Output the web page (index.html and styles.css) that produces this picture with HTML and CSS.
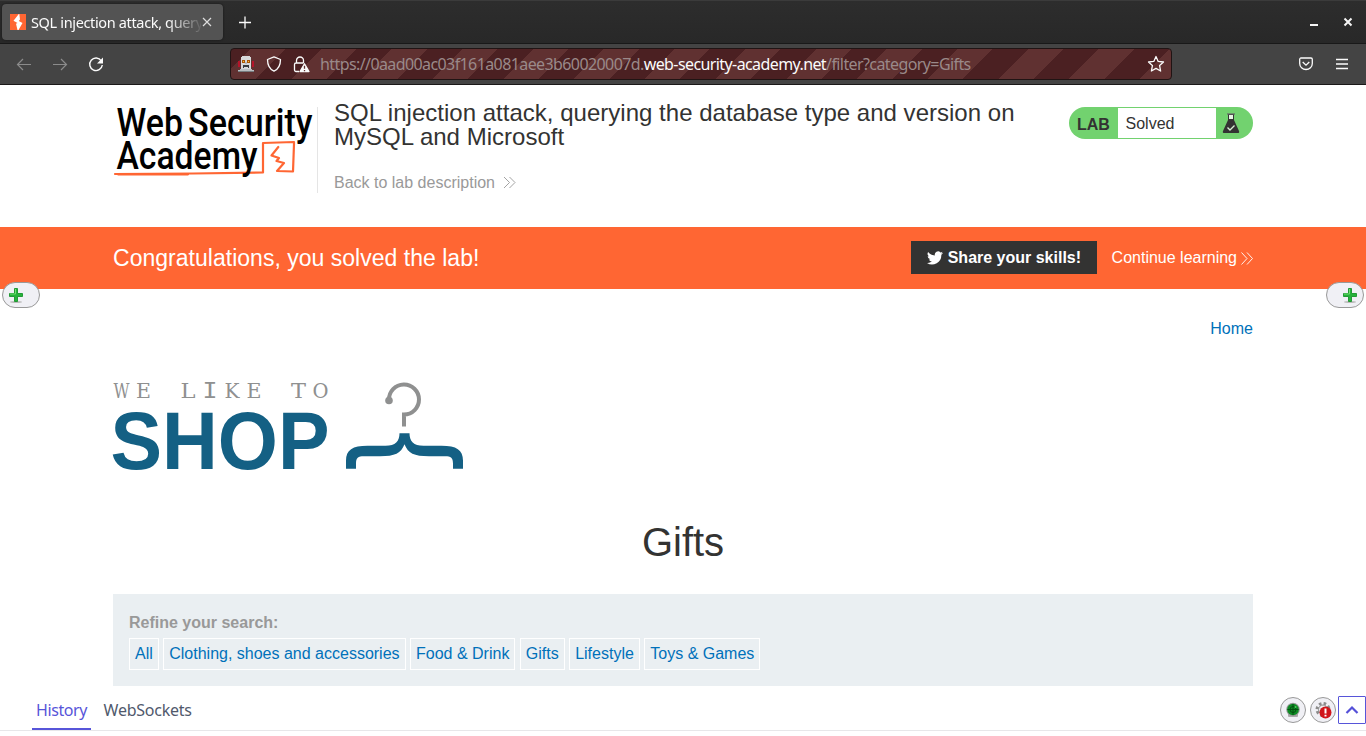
FILE: index.html
```html
<!DOCTYPE html>
<html lang="en">
<head>
<meta charset="utf-8">
<title>SQL injection attack, querying the database type and version on MySQL and Microsoft</title>
<link rel="stylesheet" href="styles.css">
</head>
<body>
<div class="tabbar">
  <div class="tab">
    <svg class="favicon" width="16" height="16" viewBox="0 0 16 16"><rect width="16" height="16" fill="#ff6633"/><path d="M8.800 0L3.500 6.800 7.500 9 6 9.800 7.500 16h1l4-7-3.700-2L10 5.500 9.300 0z" fill="#fff"/></svg>
    <span class="tab-title">SQL injection attack, query</span>
    <svg class="tab-close" width="10" height="10" viewBox="0 0 10 10" stroke="#ddd" stroke-width="1.200"><path d="M1 1l8 8M9 1l-8 8"/></svg>
  </div>
  <svg class="plus" width="12" height="12" viewBox="0 0 12 12" stroke="#fbfbfb" stroke-width="1.300"><path d="M6 .5v12M0 6.500h12"/></svg>
  <div class="winbtns">
    <svg width="8" height="10" viewBox="0 0 8 10"><path d="M0 7h8v2H0z" fill="#f5f5f5"/></svg>
    <svg width="8" height="8" viewBox="0 0 8 8" stroke="#f5f5f5" stroke-width="2"><path d="M.5 .5l7 7M7.500 .5l-7 7"/></svg>
  </div>
</div>
<div class="toolbar">
  <div class="nav">
    <svg width="16" height="16" viewBox="0 0 16 16" fill="none" stroke="#8b8b8b" stroke-width="1.200"><path d="M15 8.500H1.500M7 3L1.500 8.500 7 14"/></svg>
    <svg width="16" height="16" viewBox="0 0 16 16" fill="none" stroke="#8b8b8b" stroke-width="1.200"><path d="M1 8.500h13.500M9 3L14.500 8.500 9 14"/></svg>
    <svg width="16" height="16" viewBox="0 0 16 16" fill="none" stroke="#fbfbfb" stroke-width="1.400"><path d="M13.300 4.800A6.300 6.300 0 1 0 14.300 9"/><path d="M15 1.500v6H9z" fill="#fbfbfb" stroke="none"/></svg>
  </div>
  <div class="urlbar">
    <svg class="robot" width="17" height="17" viewBox="0 0 17 17"><path d="M0 5h2v6H0zM14 5h2v6h-2z" fill="#b5142a"/><path d="M4 0h8v1h1v12H3V1h1z" fill="#d7d9da"/><path d="M2 13h12v1h2v2H0v-2h2z" fill="#b9bec1"/><path d="M0 15h16v1H0z" fill="#777c80"/><path d="M4 4h3v3H4zM9 4h3v3H9z" fill="#a95606"/><path d="M5 5h1v1H5zM10 5h1v1h-1z" fill="#ffc33a"/><path d="M5 9h6v3h-1v-1H6v1H5z" fill="#393c40"/><path d="M7.500 6h1v2h-1z" fill="#969a9d"/></svg>
    <svg class="shield" width="16" height="16" viewBox="0 0 16 16" fill="none" stroke="#fbfbfb" stroke-width="1.300"><path d="M8 .8l6.500 2.700c0 5-1.300 9.300-6.500 11.700C2.800 12.800 1.500 8.500 1.500 3.500z" stroke-linejoin="round"/></svg>
    <svg class="lock" width="17" height="17" viewBox="0 0 17 17" fill="none" stroke="#fbfbfb" stroke-width="1.300"><path d="M3.500 7V4.500a3.500 3.500 0 0 1 7 0V7M6 15.500H3a1.500 1.500 0 0 1-1.500-1.500V8.500A1.500 1.500 0 0 1 3 7h7.500"/><path d="M11.500 7.800L16 15.500H7z" fill="#fbfbfb" stroke-linejoin="round"/><path d="M11.500 9.800v3M11.500 14v1.200" stroke="#5f3131"/></svg>
    <span class="url">https://0aad00ac03f161a081aee3b60020007d.<b>web-security-academy.net</b>/filter?category=Gifts</span>
    <svg class="star" width="18" height="18" viewBox="0 0 18 18" fill="none" stroke="#fbfbfb" stroke-width="1.300" stroke-linejoin="round"><path d="M9 1.500l2.200 4.900 5.300.6-3.900 3.600 1 5.400L9 13.400 4.400 16l1-5.400L1.500 7l5.300-.6z"/></svg>
  </div>
  <div class="tools">
    <svg width="14" height="14" viewBox="0 0 14 14" fill="none" stroke="#fbfbfb" stroke-width="1.300"><path d="M2 1h10a1.300 1.300 0 0 1 1.300 1.300V6.500a6.300 6 0 0 1-12.600 0V2.300A1.300 1.300 0 0 1 2 1z"/><path d="M3.700 5L7 8.200 10.300 5"/></svg>
    <svg width="12" height="11" viewBox="0 0 12 11" stroke="#fbfbfb" stroke-width="1.300"><path d="M0 .5h12M0 5h12M0 9.500h12"/></svg>
  </div>
</div>

<header class="lab-header">
  <svg class="logo" width="204" height="86" viewBox="0 0 204 86">
    <g class="logo-text">
      <text x="3.500" y="28.600" textLength="66.500" lengthAdjust="spacingAndGlyphs">Web</text>
      <text x="75" y="28.600" textLength="124.500" lengthAdjust="spacingAndGlyphs">Security</text>
    </g>
    <g fill="none" stroke="#ff6633" stroke-width="2.200" stroke-linejoin="round" stroke-linecap="round">
      <path d="M2 67L80 66.500 150 65.500V36L181 35V37l-1 27.500-16-.5 7-8-7.500-2 2.500-3-7.500-2.500 6.800-8.500"/>
      <path d="M5 67.300l70 0"/>
    </g>
    <text class="logo-text" x="3.500" y="61.500" textLength="141" lengthAdjust="spacingAndGlyphs">Academy</text>
  </svg>
  <div class="title-box">
    <h2>SQL injection attack, querying the database type and version on MySQL and Microsoft</h2>
    <a class="back">Back to lab description<svg width="13" height="12" viewBox="0 0 13 12" fill="none" stroke="#999" stroke-width=".9"><path d="M1 0L6.500 5.500 1 11M6.500 0L12 5.500 6.500 11"/></svg></a>
  </div>
  <div class="status">
    <span class="status-lab">LAB</span><span class="status-text">Solved</span>
    <svg width="18" height="21" viewBox="0 0 18 21"><path d="M6 1v6L1 18q-.8 2 1.300 2h13.400q2.100 0 1.300-2L12 7V1z" fill="#333332"/><path d="M7 2h4v4H7z" fill="#e8f5e5"/><path d="M5 1h8" stroke="#666" stroke-width="1.200"/><path d="M5.500 14.500l2.500 2.500 4.500-4.500" fill="none" stroke="#d8efd4" stroke-width="1.400"/></svg>
  </div>
</header>

<section class="banner">
  <div class="banner-inner">
    <h4>Congratulations, you solved the lab!</h4>
    <a class="share"><svg width="16" height="14" viewBox="0 0 24 20"><path d="M24 2.400a9.800 9.800 0 0 1-2.800.8A5 5 0 0 0 23.300.5a9.800 9.800 0 0 1-3.100 1.200A4.900 4.900 0 0 0 11.800 6.200 14 14 0 0 1 1.700 1a4.900 4.900 0 0 0 1.500 6.600A4.900 4.900 0 0 1 1 7a4.900 4.900 0 0 0 3.900 4.900 4.900 4.900 0 0 1-2.200.1 4.900 4.900 0 0 0 4.600 3.400A9.900 9.900 0 0 1 0 17.500 14 14 0 0 0 21.500 5.100 10 10 0 0 0 24 2.400z" fill="#fff"/></svg>Share your skills!</a>
    <a class="continue">Continue learning<svg width="12" height="13" viewBox="0 0 12 13" fill="none" stroke="#fff" stroke-width=".9"><path d="M.5 .5l5.500 6-5.500 6M6 .5l5.500 6-5.500 6"/></svg></a>
  </div>
  <span class="pill pill-left"><svg width="16" height="16" viewBox="0 0 16 16"><ellipse cx="8" cy="15" rx="6" ry="1" fill="#bbb"/><path d="M6.500 1.500h3v5h5v3h-5v5h-3v-5h-5v-3h5z" fill="#26b33b" stroke="#17932b" stroke-width=".9"/><path d="M7.500 2v5H2" fill="none" stroke="#70df70" stroke-width="1"/></svg></span>
  <span class="pill pill-right"><svg width="16" height="16" viewBox="0 0 16 16"><ellipse cx="8" cy="15" rx="6" ry="1" fill="#bbb"/><path d="M6.500 1.500h3v5h5v3h-5v5h-3v-5h-5v-3h5z" fill="#26b33b" stroke="#17932b" stroke-width=".9"/><path d="M7.500 2v5H2" fill="none" stroke="#70df70" stroke-width="1"/></svg></span>
</section>

<main class="shop">
  <nav class="links"><a>Home</a></nav>
  <svg class="shop-logo" width="352" height="92" viewBox="0 0 352 92">
    <g class="typed">
      <text x="0.500" y="17.500" textLength="16" lengthAdjust="spacingAndGlyphs">W</text>
      <text x="23" y="17.500" textLength="15" lengthAdjust="spacingAndGlyphs">E</text>
      <text x="67.500" y="17.500" textLength="15" lengthAdjust="spacingAndGlyphs">L</text>
      <text class="typed-i" x="89.500" y="17.500" textLength="15" lengthAdjust="spacingAndGlyphs">I</text>
      <text x="111.500" y="17.500" textLength="15" lengthAdjust="spacingAndGlyphs">K</text>
      <text x="133.500" y="17.500" textLength="15" lengthAdjust="spacingAndGlyphs">E</text>
      <text x="178" y="17.500" textLength="15" lengthAdjust="spacingAndGlyphs">T</text>
      <text x="199.500" y="17.500" textLength="16" lengthAdjust="spacingAndGlyphs">O</text>
    </g>
    <text class="shop-word" x="-2.500" y="88.500" textLength="219" lengthAdjust="spacingAndGlyphs">SHOP</text>
    <path d="M276 20A15 15 0 1 1 291 34.500V46.500" fill="none" stroke="#8f9090" stroke-width="4"/>
    <circle cx="276" cy="20.500" r="3.800" fill="#8f9090"/>
    <path d="M286.500 53.200h10c0 8 4 12.500 14 12.500h18c15 0 21.500 4 21.500 15v8h-10v-5c0-6-2-7.500-8-7.500h-16c-15 0-21-3-24.500-12-3.500 9-9.500 12-24.500 12h-16c-6 0-8 1.500-8 7.500v5h-10v-8c0-11 6.500-15 21.500-15h18c10 0 14-4.500 14-12.500z" fill="#146084"/>
  </svg>
  <h1>Gifts</h1>
  <section class="search">
    <label>Refine your search:</label>
    <div class="filters"><a>All</a><a>Clothing, shoes and accessories</a><a>Food &amp; Drink</a><a>Gifts</a><a>Lifestyle</a><a>Toys &amp; Games</a></div>
  </section>
</main>

<footer class="hud">
  <span class="hud-tab active">History</span><span class="hud-tab">WebSockets</span>
  <div class="hud-tools">
    <span class="round"><svg width="16" height="16" viewBox="0 0 16 16"><rect x="3" y="12" width="10" height="3" rx="1" fill="#aaa"/><circle cx="8" cy="7.500" r="6.800" fill="#999"/><circle cx="8" cy="7.500" r="5.800" fill="#0b8a22"/><path d="M8 2v11M2.500 7.500h11" stroke="#045010"/><circle cx="8" cy="7.500" r="3" fill="none" stroke="#045010"/><circle cx="10.500" cy="5" r="1" fill="#4cd35b"/></svg></span>
    <span class="round"><svg width="17" height="17" viewBox="0 0 17 17"><circle cx="8" cy="7.500" r="6" fill="none" stroke="#8b8b8b" stroke-width="3" stroke-dasharray="2.500 2.200"/><circle cx="8" cy="7.500" r="4.500" fill="#ededf0" stroke="#8b8b8b"/><circle cx="10.500" cy="10.500" r="6" fill="#d0151b"/><path d="M10.500 6.500v5M10.500 12.700v1.800" stroke="#fff" stroke-width="2"/></svg></span>
    <span class="up"><svg width="14" height="8" viewBox="0 0 14 8" fill="none" stroke="#5550d8" stroke-width="2.200"><path d="M1.500 7L7 1.500 12.500 7"/></svg></span>
  </div>
</footer>
</body>
</html>
```
FILE: styles.css
```css
* { box-sizing: border-box; }
body { margin: 0; width: 1366px; height: 736px; overflow: hidden; background: #fff; color: #333332; font: 16px/24px "Liberation Sans", Arial, sans-serif; display: flex; flex-direction: column; }
svg { display: block; flex: none; overflow: visible; }
h1, h2, h4 { margin: 0; font-weight: 400; }

.tabbar { flex: none; height: 44px; background: linear-gradient(#2d2d2d, #282828); border-top: 1px solid #3b3b3b; border-bottom: 1px solid #191919; display: flex; align-items: center; padding: 0 14px 0 2px; }
.tab { width: 221px; height: 36px; border-radius: 4px; background: #535353; box-shadow: 0 0 2px #111; display: flex; align-items: center; padding: 0 11px 0 8px; }
.tab-title { margin-left: 5px; width: 170px; overflow: hidden; white-space: nowrap; font: 14.500px/20px "Noto Sans", sans-serif; letter-spacing: -.35px; color: #fbfbfb; -webkit-mask-image: linear-gradient(to right, #000 136px, transparent 173px); mask-image: linear-gradient(to right, #000 136px, transparent 173px); }
.tab-close { margin-left: 1px; }
.plus { margin-left: 16px; }
.winbtns { margin-left: auto; display: flex; align-items: center; gap: 26px; }

.toolbar { flex: none; height: 41px; background: #444; border-bottom: 1px solid #1b1919; display: flex; align-items: center; padding: 0 18px 0 16px; }
.nav { width: 214px; display: flex; gap: 20px; }
.urlbar { width: 942px; height: 32px; border: 1px solid #201414; border-radius: 4px; background: repeating-linear-gradient(-45deg, #603131 -2.800px 22.200px, #4b2022 22.200px 47.200px); display: flex; align-items: center; padding: 0 6px 0 7px; }
.shield { margin-left: 11px; }
.lock { margin-left: 11px; }
.url { margin-left: 10px; font: 16px/24px "Noto Sans", sans-serif; letter-spacing: -.595px; color: #9a8989; white-space: nowrap; }
.url b { font-weight: 400; color: #fbfbfb; }
.star { margin-left: auto; }
.tools { margin-left: auto; display: flex; align-items: center; gap: 23px; }

.lab-header { flex: none; width: 1140px; height: 142px; margin: 0 auto; padding-top: 22px; display: flex; align-items: flex-start; }
.logo-text { font: 500 38px Roboto, sans-serif; fill: #000; }
.title-box { width: 740px; height: 86px; border-left: 1px solid #e5e5e5; padding-left: 16px; display: flex; flex-direction: column; justify-content: space-between; }
.title-box h2 { margin-top: -6px; font-size: 24px; line-height: 24px; letter-spacing: .015px; }
.back { color: #999; display: flex; align-items: center; gap: 8px; line-height: 20px; }
.status { margin-left: auto; width: 184px; height: 32px; border-radius: 16px; background: #72d26f; display: flex; align-items: center; padding: 1px 13px 1px 8px; justify-content: space-between; }
.status-lab { font-weight: 700; width: 41px; padding-top: 3px; }
.status-text { width: 98px; height: 30px; padding-left: 7.500px; line-height: 31px; background: #fff; margin-right: 6px; }

.banner { flex: none; position: relative; height: 62px; background: #ff6633; color: #fff; }
.banner-inner { width: 1140px; height: 62px; margin: 0 auto; display: flex; align-items: center; }
.banner h4 { font-size: 23px; letter-spacing: .02px; }
.share { margin-left: auto; margin-bottom: 1px; height: 33px; padding: 1px 16px 0 16px; background: #333332; font-weight: 700; display: flex; align-items: center; gap: 4.500px; }
.continue { margin-left: 14.500px; display: flex; align-items: center; gap: 4px; }
.pill { position: absolute; top: 55px; width: 38px; height: 26px; border: 1px solid #999; border-radius: 13px; background: #f0f0f5; display: flex; align-items: center; padding: 0 5px; }
.pill-left { left: 2px; }
.pill-right { right: 2px; justify-content: flex-end; }

.shop { flex: none; width: 1140px; height: 402px; margin: 0 auto; padding-top: 28px; display: flex; flex-direction: column; }
.links { display: flex; justify-content: flex-end; color: #0071ba; }
.shop-logo { margin-top: 39px; }
.typed { font: 21px "DejaVu Serif", serif; fill: #8f9090; }
.typed-i { font: 20.500px "DejaVu Sans Mono", monospace; }
.shop-word { font: 700 81px "Liberation Sans", Arial, sans-serif; fill: #146084; }
h1 { margin-top: 47px; font-size: 40px; line-height: 46px; text-align: center; }
.search { margin-top: 29px; height: 92px; padding: 17px 16px 15px; background: #eaeff2; }
.search label { display: block; font-weight: 700; color: #999; }
.filters { display: flex; gap: 4.450px; margin-top: 3px; }
.filters a { border: 1px solid #fff; padding: 3px 5px 5px; height: 32px; line-height: 23px; color: #0071ba; white-space: nowrap; }

.hud { flex: none; height: 40px; border-bottom: 1px solid #e7e7e9; display: flex; padding-left: 32px; font: 16px/24px "Noto Sans", sans-serif; letter-spacing: -.25px; color: #50596c; }
.hud-tab { height: 39px; padding: 7px 4px 0; margin-right: 8.500px; }
.active { letter-spacing: -.4px; color: #5755d9; border-bottom: 2px solid #5755d9; }
.hud-tools { margin-left: auto; display: flex; align-items: center; gap: 4px; margin-top: -1px; }
.round { width: 26px; height: 26px; border: 1px solid #999; border-radius: 50%; background: #f0f0f5; display: flex; align-items: center; justify-content: center; }
.up { width: 28px; height: 28px; margin-left: -2px; border: 1px solid #5755d9; border-radius: 1px; display: flex; align-items: center; justify-content: center; }
```
